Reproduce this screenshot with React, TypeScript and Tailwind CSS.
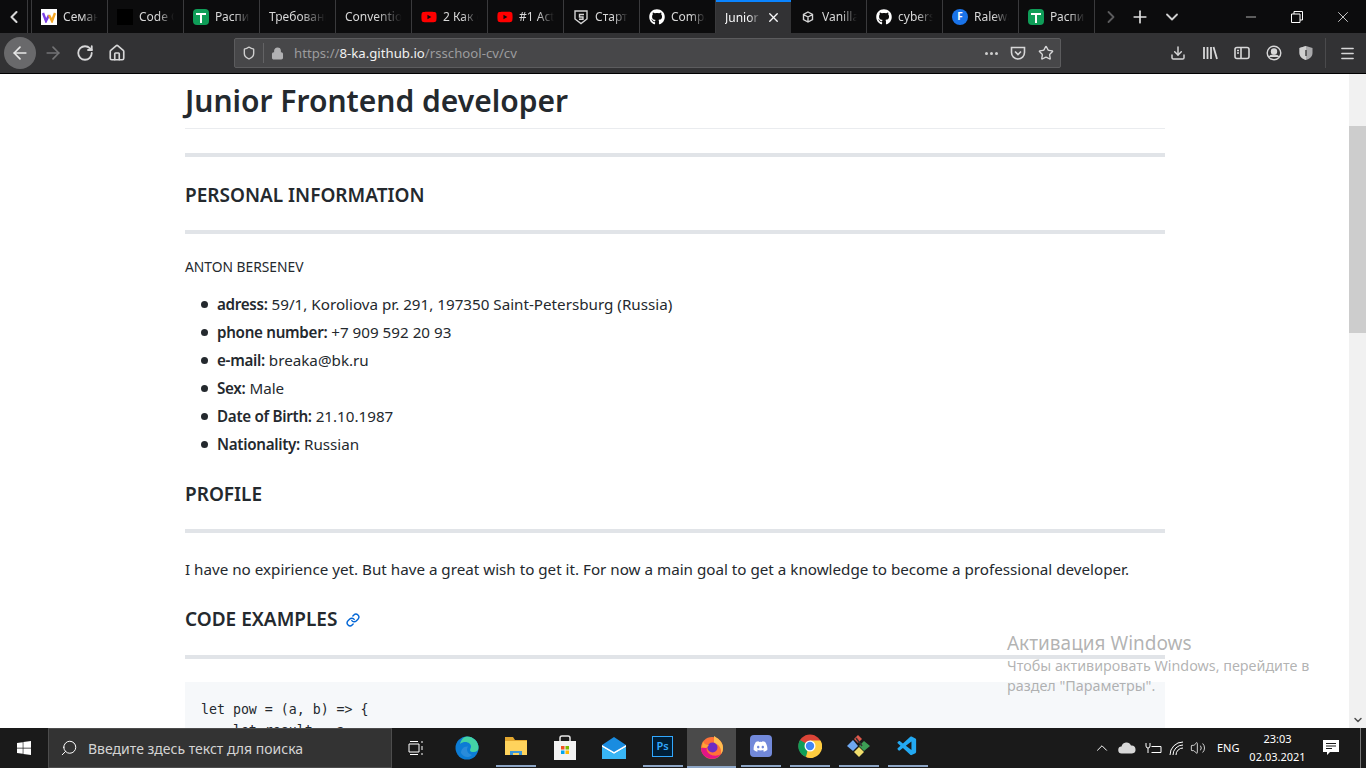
import { ArrowLeft, ArrowRight, ChevronDown, ChevronLeft, ChevronRight, Download, Home, Link, Lock, Menu, Minus, Plus, RotateCw, Search, Shield, Star, Volume2, X } from 'lucide-react';
import { ReactNode } from 'react';
import { FaDiscord, FaGithub, FaWindows, FaYoutube } from 'react-icons/fa';
import { VscVscode } from 'react-icons/vsc';

const SheetIcon = () => (
    <span className="flex h-4 w-4 items-center justify-center rounded-sm bg-[#0f9d58]">
        <svg width="12" height="12" viewBox="0 0 12 12">
            <path d="M1 3h10M6 3v9" stroke="#fff" strokeWidth="2" />
        </svg>
    </span>
);

const YoutubeIcon = () => <FaYoutube className="h-4 w-4 text-[#ff0000]" />;
const GithubIcon = () => <FaGithub className="h-4 w-4 text-white" />;

const tabs: { title: string; icon?: ReactNode }[] = [
    {
        title: 'Семантика',
        icon: (
            <span className="flex h-4 w-4 items-center justify-center bg-white">
                <svg width="14" height="12" viewBox="0 0 14 12">
                    <path d="M1 2l3 8 3-6" stroke="#7b3fe4" strokeWidth="2.4" fill="none" />
                    <path d="M7 4l3 6 3-8" stroke="#f5a623" strokeWidth="2.4" fill="none" />
                </svg>
            </span>
        ),
    },
    { title: 'Code Guide', icon: <span className="h-4 w-4 bg-black" /> },
    { title: 'Расписание', icon: <SheetIcon /> },
    { title: 'Требования' },
    { title: 'Conventions' },
    { title: '2 Как с', icon: <YoutubeIcon /> },
    { title: '#1 Actions', icon: <YoutubeIcon /> },
    {
        title: 'Старт',
        icon: (
            <svg width="16" height="16" viewBox="0 0 16 16" fill="none" stroke="#d4d4d4" strokeWidth="1.4">
                <path d="M2 2h12v8l-6 4.500L2 10z" />
                <path d="M11 5.500H6.500v2.500H10v2.200H6" />
            </svg>
        ),
    },
    { title: 'Compare', icon: <GithubIcon /> },
    { title: 'Junior Frontend' },
    {
        title: 'Vanilla',
        icon: (
            <svg width="12" height="12" viewBox="0 0 12 12" fill="none" stroke="#d4d4d4" strokeWidth="1.4">
                <path d="M6 1l4.500 2.500v5L6 11 1.500 8.500v-5zM1.500 3.500L6 6l4.500-2.500M6 6v5" />
            </svg>
        ),
    },
    { title: 'cybersecurity', icon: <GithubIcon /> },
    {
        title: 'Raleway',
        icon: (
            <span className="flex h-4 w-4 items-center justify-center rounded-full bg-[#1a73e8] text-[10px] font-bold text-white">
                F
            </span>
        ),
    },
    { title: 'Расписание', icon: <SheetIcon /> },
];

const personalInfo = [
    { label: 'adress:', value: '59/1, Koroliova pr. 291, 197350 Saint-Petersburg (Russia)' },
    { label: 'phone number:', value: '+7 909 592 20 93' },
    { label: 'e-mail:', value: 'breaka@bk.ru' },
    { label: 'Sex:', value: 'Male' },
    { label: 'Date of Birth:', value: '21.10.1987' },
    { label: 'Nationality:', value: 'Russian' },
];

function Tab({ title, icon, active }: { title: string; icon?: ReactNode; active?: boolean }) {
    if (active) {
        return (
            <div className="flex h-[33px] w-[75px] shrink-0 items-center border-t-2 border-[#0a84ff] bg-[#323234] pl-[9px] text-[#f9f9fa]">
                <span className="w-[36px] overflow-hidden whitespace-nowrap [mask-image:linear-gradient(to_right,black_65%,transparent)]">
                    {title}
                </span>
                <X className="ml-[5px] h-[15px] w-[15px]" strokeWidth={2.2} />
            </div>
        );
    }
    return (
        <div className="flex h-[33px] w-[76px] shrink-0 items-center gap-[6px] border-r border-[#3a3a3c] pl-[9px] pr-[9px] text-[#d8d8d8]">
            {icon && <span className="flex w-4 shrink-0 justify-center">{icon}</span>}
            <span className="overflow-hidden whitespace-nowrap [mask-image:linear-gradient(to_right,black_55%,transparent)]">
                {title}
            </span>
        </div>
    );
}

function TabBar() {
    return (
        <div className="flex h-[33px] items-center bg-[#0c0c0d] text-[12px]">
            <div className="flex h-[33px] w-[28px] shrink-0 items-center justify-center border-r border-[#3a3a3c]">
                <ChevronLeft className="h-5 w-5 text-[#d8d8d8]" strokeWidth={2.5} />
            </div>
            <div className="h-[33px] w-[4px] shrink-0 border-r border-[#3a3a3c]" />
            {tabs.map((tab, i) => (
                <Tab key={i} title={tab.title} icon={tab.icon} active={i === 9} />
            ))}
            <div className="ml-px flex w-[30px] justify-center">
                <ChevronRight className="h-5 w-5 text-[#5c5c5e]" strokeWidth={2.2} />
            </div>
            <Plus className="ml-[4px] h-[20px] w-[20px] text-[#e0e0e0]" strokeWidth={2} />
            <ChevronDown className="ml-[12px] h-5 w-5 text-[#d0d0d0]" strokeWidth={2.2} />
            <div className="ml-auto flex items-center">
                <span className="flex w-[46px] justify-center">
                    <Minus className="h-4 w-4 text-white" strokeWidth={1} />
                </span>
                <span className="flex w-[46px] justify-center">
                    <svg width="12" height="12" viewBox="0 0 12 12" fill="none" stroke="#fff">
                        <path d="M0.500 3h8.500v8.500H0.500zM3 3V0.500h8.500V9H9" />
                    </svg>
                </span>
                <span className="flex w-[46px] justify-center">
                    <X className="h-[18px] w-[18px] text-white" strokeWidth={1} />
                </span>
            </div>
        </div>
    );
}

function NavBar() {
    return (
        <div className="flex h-[41px] items-center border-b border-black bg-[#323234] pl-[4px] text-[#d7d7d8]">
            <span className="flex h-8 w-8 items-center justify-center rounded-full bg-[#69696b]">
                <ArrowLeft className="h-[20px] w-[20px] text-[#e8e8e8]" strokeWidth={2} />
            </span>
            <ArrowRight className="ml-[7px] h-[20px] w-[20px] text-[#737375]" strokeWidth={2} />
            <RotateCw className="ml-[13px] h-[18px] w-[18px]" strokeWidth={2.4} />
            <Home className="ml-[14px] h-[18px] w-[18px]" strokeWidth={2.2} />
            <div className="ml-[108px] flex h-[30px] w-[827px] items-center rounded-[2px] border border-[#5c5c5e] bg-[#474749] pl-[7px]">
                <Shield className="h-[14px] w-[14px] text-[#cfcfcf]" strokeWidth={2.4} />
                <span className="ml-[7px] h-5 w-px bg-[#636365]" />
                <Lock className="ml-[7px] h-[13px] w-[13px] fill-[#b1b1b3] text-[#b1b1b3]" strokeWidth={2.4} />
                <span className="ml-[10px] mt-[2px] whitespace-nowrap text-[13.200px] text-[#9c9c9e]">
                    https://<span className="text-[#f1f1f1]">8-ka.github.io</span>/rsschool-cv/cv
                </span>
                <span className="ml-auto flex gap-[2px]">
                    <i className="h-[3px] w-[3px] rounded-full bg-[#cfcfcf]" />
                    <i className="h-[3px] w-[3px] rounded-full bg-[#cfcfcf]" />
                    <i className="h-[3px] w-[3px] rounded-full bg-[#cfcfcf]" />
                </span>
                <svg className="ml-[12px]" width="16" height="16" viewBox="0 0 16 16" fill="none" stroke="#d7d7d8" strokeWidth="1.600">
                    <path d="M1.500 2.500h13v5a6.500 6.500 0 0 1-13 0z" />
                    <path d="M5 6.500l3 3 3-3" />
                </svg>
                <Star className="ml-[12px] mr-[6px] h-4 w-4" strokeWidth={2} />
            </div>
            <Download className="ml-[109px] h-4 w-4" strokeWidth={2.2} />
            <svg className="ml-[16px]" width="16" height="16" viewBox="0 0 16 16" fill="none" stroke="#d7d7d8" strokeWidth="1.800">
                <path d="M2 2v12M5.500 2v12M9 2v12M11.500 2l3.500 12" />
            </svg>
            <svg className="ml-[16px]" width="16" height="16" viewBox="0 0 16 16" fill="none" stroke="#d7d7d8" strokeWidth="1.600">
                <rect x="1" y="2.500" width="14" height="11" rx="2" />
                <path d="M7 3v10M3 5.500h2M3 8h2" />
            </svg>
            <svg className="ml-[16px]" width="16" height="16" viewBox="0 0 16 16" fill="none" stroke="#d7d7d8" strokeWidth="1.400">
                <circle cx="8" cy="8" r="6.800" />
                <circle cx="8" cy="6.500" r="2.500" fill="#d7d7d8" />
                <path d="M3.500 12c1-2.500 8-2.500 9 0" fill="#d7d7d8" />
            </svg>
            <svg className="ml-[16px]" width="16" height="16" viewBox="0 0 16 16">
                <path d="M8 1l6.500 2v5c0 3.500-3 6-6.500 7-3.500-1-6.500-3.500-6.500-7V3z" fill="#a9a9ab" />
                <path d="M8 1v14c-3.500-1-6.500-3.500-6.500-7V3z" fill="#d0d0d0" />
                <path d="M8 5v6" stroke="#444" strokeWidth="1.500" />
            </svg>
            <span className="ml-[11px] h-[30px] w-px bg-[#4a4a4c]" />
            <Menu className="ml-[13px] h-[17px] w-[17px]" strokeWidth={2} />
        </div>
    );
}

function Heading({ children }: { children: ReactNode }) {
    return <h2 className="text-[19px] font-semibold leading-[25px] text-[#24292e]">{children}</h2>;
}

function Rule({ className }: { className: string }) {
    return <hr className={`h-[4px] border-0 bg-[#e1e4e8] ${className}`} />;
}

function Content() {
    return (
        <div className="min-w-0 flex-1 overflow-hidden">
            <div className="ml-[185px] w-[980px] text-[15.200px] leading-[24px] text-[#24292e]">
                <h1 className="mt-[7px] border-b border-[#eaecef] pb-[7px] text-[30px] font-semibold leading-[40px]">
                    Junior Frontend developer
                </h1>
                <Rule className="mt-[24px]" />
                <div className="mt-[26px]">
                    <Heading>PERSONAL INFORMATION</Heading>
                </div>
                <Rule className="mt-[22px]" />
                <h4 className="mt-[24px] text-[13.800px] font-normal leading-[18px]">ANTON BERSENEV</h4>
                <ul className="mt-[16px] pl-[16px]">
                    {personalInfo.map((row) => (
                        <li key={row.label} className="mb-[4px] flex h-[24px] items-center">
                            <span className="mr-[9px] h-[7px] w-[7px] rounded-full bg-[#24292e]" />
                            <span>
                                <strong className="font-semibold tracking-[-0.3px]">{row.label}</strong> {row.value}
                            </span>
                        </li>
                    ))}
                </ul>
                <div className="mt-[26px]">
                    <Heading>PROFILE</Heading>
                </div>
                <Rule className="mt-[22px]" />
                <p className="mt-[24px]">
                    I have no expirience yet. But have a great wish to get it. For now a main goal to get a knowledge to
                    become a professional developer.
                </p>
                <div className="mt-[26px] flex items-center gap-[9px]">
                    <Heading>CODE EXAMPLES</Heading>
                    <Link className="h-[14px] w-[14px] text-[#0366d6]" strokeWidth={2.4} />
                </div>
                <Rule className="mt-[23px]" />
                <pre className="mt-[23px] h-[120px] bg-[#f6f8fa] px-[16px] pt-[17px] font-['DejaVu_Sans_Mono',monospace] text-[13.250px] leading-[21px] text-[#24292e]">
                    {'let pow = (a, b) => {\n    let result = a;'}
                </pre>
            </div>
        </div>
    );
}

function Scrollbar() {
    return (
        <div className="flex w-[17px] shrink-0 flex-col bg-[#f1f1f1]">
            <div className="flex h-[17px] items-center justify-center" />
            <div className="mt-[35px] h-[207px] bg-[#cdcdcd]" />
            <div className="mt-auto flex h-[17px] items-center justify-center">
                <ChevronDown className="h-3 w-3 text-[#505050]" strokeWidth={3} />
            </div>
        </div>
    );
}

function TaskIcon({ children, active, open }: { children: ReactNode; active?: boolean; open?: boolean }) {
    return (
        <div className={`flex h-10 w-[49px] shrink-0 items-center justify-center ${open ? 'border-b-2' : ''} ${active ? 'border-[#8ea6c6] bg-[#4a4a4a]' : 'border-transparent'}`}>
            <span className={`flex h-10 w-[40px] items-center justify-center ${open && !active ? 'border-b-2 border-[#8ea6c6]' : ''}`}>
                {children}
            </span>
        </div>
    );
}

function Taskbar() {
    return (
        <div className="flex h-10 shrink-0 items-center bg-[#1a1a1a] text-white">
            <div className="flex w-[48px] justify-center">
                <FaWindows className="h-[16px] w-[16px]" />
            </div>
            <div className="flex h-10 w-[344px] items-center border border-[#4c4c4c] bg-[#333333] pl-[11px] text-[14px] text-[#d4d4d4]">
                <Search className="h-[18px] w-[18px] -scale-x-100 text-white" strokeWidth={1.3} />
                <span className="ml-[10px] font-['Noto_Sans',sans-serif]">Введите здесь текст для поиска</span>
            </div>
            <div className="flex w-[48px] justify-center">
                <svg width="16" height="16" viewBox="0 0 16 16" fill="none" stroke="#fff">
                    <path d="M1 4h10v8H1zM2 1.500h8M2 14.500h8M14 1v2M14 6v4M14 13v2" />
                </svg>
            </div>
            <span className="w-[2px]" />
            <TaskIcon>
                <svg width="24" height="24" viewBox="0 0 24 24">
                    <circle cx="12" cy="12" r="11.500" fill="#0c7cd5" />
                    <path d="M12 .5a11.500 11.500 0 0 1 11.500 11.500c0 3-3 4.500-6 4-4-.5-2-3-1.500-5C16.500 7 10 4 5 8 6 3.500 9 .5 12 .5z" fill="#44d3a5" />
                    <path d="M6 17c0-4 3-7 7-6.500-2 3-1 7 4 8.500-3 3-8 3-11-2z" fill="#fff" fillOpacity=".12" />
                </svg>
            </TaskIcon>
            <TaskIcon open>
                <svg width="22" height="20" viewBox="0 0 22 20">
                    <path d="M0 1h8l2 3h12v15H0z" fill="#e3a72f" />
                    <path d="M0 5h22v14H0z" fill="#ffd35c" />
                    <path d="M5 15h12v4h-3v-2H8v2H5z" fill="#3e97d8" />
                </svg>
            </TaskIcon>
            <TaskIcon>
                <svg width="24" height="26" viewBox="0 0 24 26">
                    <path d="M7 7V3a2 2 0 0 1 2-2h6a2 2 0 0 1 2 2v4" fill="none" stroke="#e8e8e8" strokeWidth="1.500" />
                    <path d="M1 6h22v19H1z" fill="#f3f3f3" />
                    <path d="M8 11h3.500v3.500H8z" fill="#f25022" />
                    <path d="M12.500 11H16v3.500h-3.500z" fill="#7fba00" />
                    <path d="M8 15.500h3.500V19H8z" fill="#00a4ef" />
                    <path d="M12.500 15.500H16V19h-3.500z" fill="#ffb900" />
                </svg>
            </TaskIcon>
            <TaskIcon>
                <svg width="24" height="22" viewBox="0 0 24 22">
                    <path d="M0 8L12 0l12 8v14H0z" fill="#1a8ce0" />
                    <path d="M0 8l12 7 12-7v2l-12 7L0 10z" fill="#fff" />
                    <path d="M0 10l12 7 12-7v12H0z" fill="#38b5f5" />
                </svg>
            </TaskIcon>
            <TaskIcon open>
                <span className="flex h-[21px] w-[21px] items-center justify-center border-[1.5px] border-[#31a8ff] bg-[#001e36] font-['Noto_Sans',sans-serif] text-[11px] font-semibold text-[#31a8ff]">
                    Ps
                </span>
            </TaskIcon>
            <TaskIcon open active>
                <svg width="24" height="24" viewBox="0 0 24 24">
                    <circle cx="12" cy="13" r="11" fill="#ff7139" />
                    <path d="M14 1c3 2 9 5 9 12 0 3-1 5-2 6 1-5-2-10-7-11z" fill="#ffbd4f" />
                    <path d="M1 13a11 11 0 0 0 20 6c-4 3-12 2-14-3-1-2 0-3 0-3z" fill="#e31587" />
                    <circle cx="12.500" cy="12.500" r="5" fill="#6e2bc4" />
                    <path d="M3 6c1 3 3 4 6 4l-3 3-4-1z" fill="#ffa436" />
                </svg>
            </TaskIcon>
            <TaskIcon open>
                <span className="flex h-[22px] w-[22px] items-center justify-center rounded-[4px] bg-[#7289da]">
                    <FaDiscord className="h-[15px] w-[15px] text-white" />
                </span>
            </TaskIcon>
            <TaskIcon open>
                <svg width="24" height="24" viewBox="0 0 24 24">
                    <circle cx="12" cy="12" r="11.500" fill="#db4437" />
                    <path d="M12 12L2 6a11.500 11.500 0 0 0 6 17z" fill="#0f9d58" />
                    <path d="M12 6.500h10.500A11.500 11.500 0 0 1 8 23z" fill="#ffcd40" />
                    <circle cx="12" cy="12" r="5.500" fill="#fff" />
                    <circle cx="12" cy="12" r="4.200" fill="#4285f4" />
                </svg>
            </TaskIcon>
            <TaskIcon open>
                <svg width="24" height="24" viewBox="0 0 24 24">
                    <path d="M8 1l4 4-4 4-4-4z" transform="translate(3 0)" fill="#e0594c" />
                    <path d="M0 12l6-6 5 6-5 5z" fill="#6fa8f0" />
                    <path d="M7 18l5-5 5 5-5 5z" fill="#f0dd6c" />
                    <path d="M12 12l5-5 6 5-6 5z" fill="#3d9e55" />
                    <path d="M9 4l6 8" stroke="#333" strokeWidth="1.500" />
                </svg>
            </TaskIcon>
            <TaskIcon open>
                <VscVscode className="h-[23px] w-[23px] text-[#23a9f2]" />
            </TaskIcon>
            <div className="ml-[161px] flex items-center">
                <ChevronDown className="h-[18px] w-[18px] rotate-180" strokeWidth={1.3} />
                <svg className="ml-[7px]" width="18" height="12" viewBox="0 0 18 12">
                    <path d="M4 11.500a3.500 3.500 0 0 1-.5-7 5 5 0 0 1 9.500-1 4 4 0 0 1 1 8z" fill="#d8d8d8" />
                </svg>
                <svg className="ml-[9px]" width="17" height="12" viewBox="0 0 17 12" fill="none" stroke="#fff">
                    <path d="M1 1v3a2 2 0 0 0 4 0V1M3 6v5M6.500 4.500H16v6H6.500" />
                </svg>
                <svg className="ml-[7px]" width="15" height="15" viewBox="0 0 15 15" fill="none" stroke="#fff">
                    <path d="M1 14A13 13 0 0 1 14 1M4 14A10 10 0 0 1 14 4M7 14a7 7 0 0 1 7-7" />
                </svg>
                <Volume2 className="ml-[6px] h-[16px] w-[16px]" strokeWidth={1.2} />
                <span className="ml-[11px] font-['Noto_Sans',sans-serif] text-[11px]">ENG</span>
                <span className="ml-[6px] w-[64px] text-center font-['Noto_Sans',sans-serif] text-[11px] leading-[18px]">
                    23:03
                    <br />
                    02.03.2021
                </span>
                <svg className="ml-[14px]" width="17" height="16" viewBox="0 0 17 16">
                    <path d="M0 0h16v12H7l-3 3v-3H0z" fill="#fff" />
                    <path d="M3 3.500h10M3 6h10M3 8.500h6" stroke="#1a1a1a" />
                </svg>
                <span className="ml-[20px] h-10 w-px bg-[#777]" />
            </div>
        </div>
    );
}

export default function App() {
    return (
        <div className="relative flex h-screen flex-col overflow-hidden bg-white font-['Noto_Sans',sans-serif]">
            <TabBar />
            <NavBar />
            <div className="flex min-h-0 flex-1">
                <Content />
                <Scrollbar />
            </div>
            <Taskbar />
            <div className="absolute left-[1007px] top-[631px] w-[320px] text-[#808080]/60">
                <p className="text-[19px] leading-[25px]">Активация Windows</p>
                <p className="text-[14.350px] leading-[20px]">
                    Чтобы активировать Windows, перейдите в раздел "Параметры".
                </p>
            </div>
        </div>
    );
}
